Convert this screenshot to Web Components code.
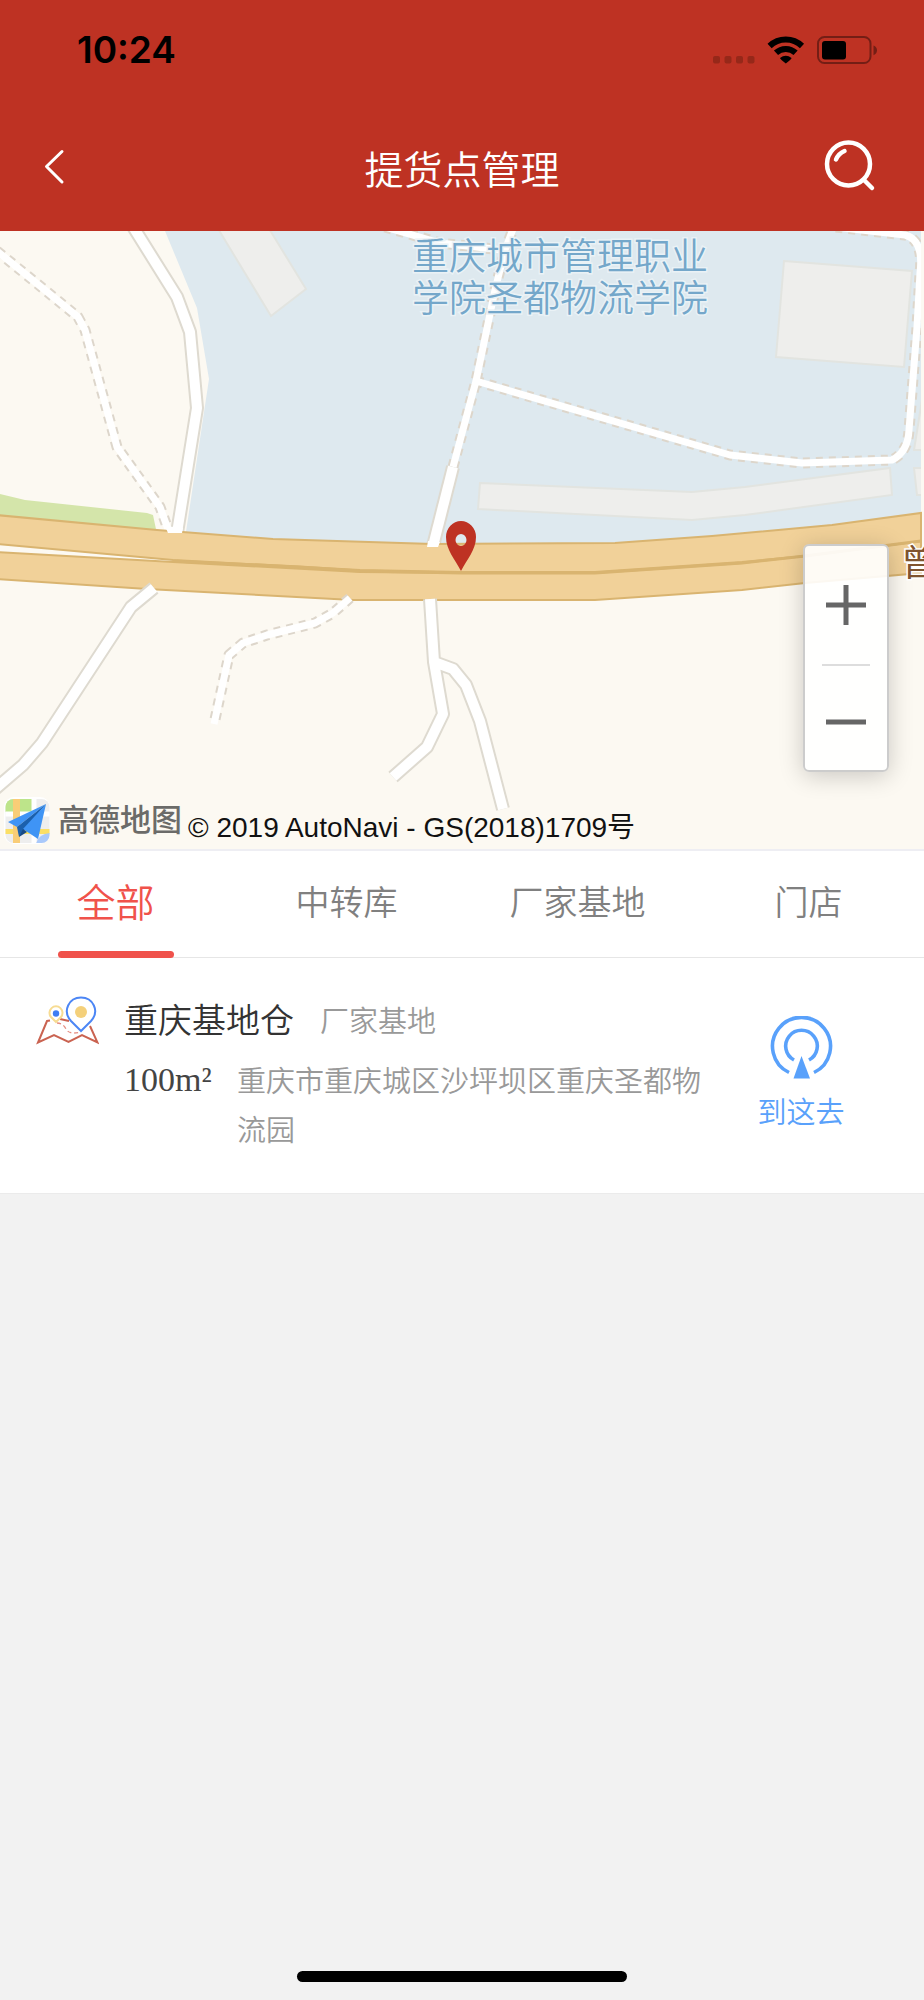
<!DOCTYPE html>
<html lang="zh-CN">
<head>
<meta charset="utf-8">
<meta name="viewport" content="width=device-width, initial-scale=1">
<title>提货点管理</title>
<style>
html, body { margin: 0; }
body { background: #f2f2f2; font-family: "Noto Sans CJK SC", sans-serif; font-weight: 350; }
</style>
</head>
<body>
<pickup-page>
  <status-bar slot="top" time="10:24"></status-bar>
  <nav-bar slot="top">提货点管理</nav-bar>
  <area-map></area-map>
  <tab-bar>
    <tab-item selected>全部</tab-item>
    <tab-item>中转库</tab-item>
    <tab-item>厂家基地</tab-item>
    <tab-item>门店</tab-item>
  </tab-bar>
  <pickup-card>
    <span slot="name">重庆基地仓</span>
    <span slot="kind">厂家基地</span>
    <span slot="area">100m²</span>
    <span slot="address">重庆市重庆城区沙坪坝区重庆圣都物流园</span>
  </pickup-card>
</pickup-page>

<script>
function define(name, html) {
  const template = document.createElement('template');
  template.innerHTML = html;
  customElements.define(name, class extends HTMLElement {
    constructor() {
      super();
      this.attachShadow({ mode: 'open' }).append(template.content.cloneNode(true));
    }
    connectedCallback() {
      for (const node of this.shadowRoot.querySelectorAll('[data-attr]')) {
        node.textContent = this.getAttribute(node.dataset.attr);
      }
      const tab = this.shadowRoot.querySelector('[role=tab]');
      if (tab) tab.setAttribute('aria-selected', String(this.hasAttribute('selected')));
    }
  });
}

define('pickup-page', `
<style>
:host { display: flex; flex-direction: column; min-height: 100vh; }
header { background: #be3223; color: #fff; }
main { flex: 1; }
footer { display: flex; justify-content: center; padding-bottom: 18px; }
.home { width: 330px; height: 11px; border-radius: 6px; background: #000; }
</style>
<header><slot name="top"></slot></header>
<main><slot></slot></main>
<footer><div class="home"></div></footer>`);

define('status-bar', `
<style>
:host { display: flex; align-items: center; justify-content: space-between; height: 99px; padding: 0 46px 0 77px; color: #000; }
time { font: 600 37px/48px Inter, sans-serif; }
svg { display: block; }
</style>
<time data-attr="time"></time>
<svg width="168" height="32" viewBox="710 33 168 32" aria-hidden="true">
  <g fill="#962819"><rect x="713" y="55" width="7" height="7.500" rx="2"/><rect x="724.500" y="55" width="7" height="7.500" rx="2"/><rect x="736" y="55" width="7" height="7.500" rx="2"/><rect x="747.500" y="55" width="7" height="7.500" rx="2"/></g>
  <g fill="none" stroke="#000" stroke-width="6"><path d="M769.600 45A23.500 23.500 0 0 1 802 45"/><path d="M776 51.800A14.300 14.300 0 0 1 795.600 51.800"/></g>
  <path d="M780 57Q785.800 52.400 791.600 57Q791.500 58 785.800 62.500Q780.100 58 780 57Z"/>
  <rect x="818" y="36" width="52.500" height="26" rx="6.500" fill="none" stroke="#741e15" stroke-width="2"/>
  <rect x="822" y="40" width="24" height="18.500" rx="3"/>
  <path d="M873.500 44.500Q877 46 877 49.300T873.500 54.200Z" fill="#741e15"/>
</svg>`);

define('nav-bar', `
<style>
:host { display: grid; grid-template-columns: 120px 1fr 120px; align-items: center; height: 132px; }
h1 { margin: 0; font-size: 39px; line-height: 60px; font-weight: inherit; text-align: center; padding-top: 4px; }
button { all: unset; display: block; height: 60px; cursor: pointer; }
svg { display: block; fill: none; stroke: #fff; stroke-linecap: round; stroke-linejoin: round; }
.find { justify-self: end; }
</style>
<button aria-label="返回"><svg width="80" height="60" viewBox="0 135 80 60" stroke-width="3"><path d="M62 151.500L46.500 166.500L62 182"/></svg></button>
<h1><slot></slot></h1>
<button class="find" aria-label="搜索"><svg width="104" height="60" viewBox="820 135 104 60" stroke-width="4.500"><circle cx="848.500" cy="164" r="21.500"/><path d="M864 180L872 188M836 159.500Q838.500 153.500 844.500 151"/></svg></button>`);

define('map-zoom', `
<style>
:host { display: flex; flex-direction: column; align-items: center; box-sizing: border-box; width: 86px; height: 228px; border: 2px solid #ccc; border-radius: 6px; background: rgba(255,255,255,.9); box-shadow: 0 4px 24px rgba(0,0,0,.2); }
button { all: unset; box-sizing: border-box; flex: none; display: grid; place-items: center; width: 100%; height: 118px; cursor: pointer; }
.out { height: 104px; padding-top: 8px; }
svg { display: block; stroke: #666; stroke-width: 5; }
hr { flex: none; width: 48px; height: 2px; margin: 0; border: 0; background: #ddd; }
</style>
<button aria-label="放大"><svg width="40" height="40"><path d="M0 20H40M20 0V40"/></svg></button>
<hr>
<button class="out" aria-label="缩小"><svg width="40" height="40"><path d="M0 20H40"/></svg></button>`);

define('area-map', `
<style>
:host { display: block; position: relative; overflow: hidden; background: #fcf9f2; border-bottom: 2px solid #eeeef3; }
.map { display: block; width: 100%; height: auto; }
.edge { stroke: #dedad0; stroke-width: 14; }
.road { stroke: #fff; stroke-width: 10; }
.dash { stroke: #ddd6cb; stroke-width: 11; stroke-dasharray: 7 6; }
.path { stroke: #fff; stroke-width: 7; }
map-zoom { position: absolute; right: 35px; bottom: 77px; }
.credit { position: absolute; left: 4px; bottom: 5px; display: flex; align-items: center; }
.brand { margin-left: 8px; padding-bottom: 4px; font-size: 31px; line-height: 44px; font-weight: 500; color: #6b6b69; }
.copy { margin-left: 6px; padding-top: 16px; font: 28px/32px "Liberation Sans", "Noto Sans CJK SC", sans-serif; color: #111; white-space: nowrap; }
.credit svg { display: block; flex: none; }
</style>
<svg class="map" viewBox="0 231 924 618" role="img" aria-label="地图">
  <defs>
    <path id="a" d="M132 225L177 297L190 332L197 408L177 533"/>
    <path id="b" d="M-3 251L78 317L85 330L117 447L160 507L169 532"/>
    <path id="c" d="M154 588L131 607L42 743L23 765L-5 789"/>
    <path id="d" d="M350 598L333 613L315 623L267 635L243 643L229 655L214 724"/>
    <path id="e" d="M430 599L434 662L443 714L427 747L393 777M434 662L453 669L466 685L480 721L503 809"/>
    <path id="g" d="M433 546L453 467"/>
    <path id="h" d="M453 467L461 437L476 381L495 290L505 250L513 229M385 227L440 243L503 250M476 381L730 455L802 463L892 460Q908 452 909 430L917 327L920 273Q924 240 905 235L835 227"/>
  </defs>
  <path d="M165 231L197 308L209 379L184 545H921V231Z" fill="#dee9ef"/>
  <g fill="#eeeeec" stroke="#e2e4e0" stroke-width="2">
    <path d="M217 227L271 316L306 289L268 227Z"/><path d="M784 261L912 271L904 367L776 357Z"/>
    <path d="M480 483L692 492L745 487L890 468L892 495L745 515L692 520L478 509Z"/>
    <path d="M922 400L914 450H922M922 468H914L917 495H922"/>
  </g>
  <path d="M0 494L25 500L147 513L153 515L157 534L0 524Z" fill="#d4e5aa"/>
  <g fill="none" stroke-linejoin="round">
    <use href="#h" class="dash"/><use href="#b" class="dash"/>
    <use href="#h" class="path"/><use href="#b" class="path"/>
    <use href="#a" class="edge"/><use href="#a" class="road"/>
    <use href="#g" class="edge"/><use href="#g" class="road"/>
  </g>
  <rect x="921" y="225" width="3" height="330" fill="#fcf9f2"/>
  <g fill="#f1d199" stroke="#d9b470" stroke-width="2">
    <path d="M-4 552L173 562L360 572L462 573H595L742 563L805 556L921 541V573L805 583L742 590L595 600H353L147 589L-4 579Z"/>
    <path d="M-4 515L157 530L273 539L433 544L615 543L712 536L832 525L921 513V541L805 556L742 562L595 572H462L360 570L173 560L-4 544Z"/>
    <path d="M173 561L300 567L360 571L462 573H595L742 563L805 556L921 541" fill="none" stroke-width="3"/>
  </g>
  <path d="M165 526L168 533H182L183 528M428 541L427 547H438L440 542" fill="#fff"/>
  <g fill="none" stroke-linejoin="round">
    <use href="#c" class="edge"/><use href="#c" class="road"/>
    <use href="#d" class="dash"/><use href="#d" class="path"/>
    <use href="#e" class="edge"/><use href="#e" class="road"/>
  </g>
  <path d="M461 571C455 559 446 550 446 537A15 16 0 0 1 476 537C476 550 467 559 461 571ZM461 534A5.500 6 0 0 0 461 546A5.500 6 0 0 0 461 534Z" fill="#be3223" fill-rule="evenodd"/>
  <g font-size="37" fill="#74a7ca" stroke="#eaf2f6" stroke-width="3" paint-order="stroke">
    <text x="412" y="270">重庆城市管理职业</text>
    <text x="412" y="312">学院圣都物流学院</text>
  </g>
  <text x="901" y="576" font-size="36" font-weight="400" fill="#80542f" stroke="#fff" stroke-width="3" paint-order="stroke">曾</text>
</svg>
<map-zoom></map-zoom>
<div class="credit">
  <svg width="46" height="48" viewBox="4 795 46 48" aria-hidden="true">
    <rect x="4" y="796" width="46" height="47" rx="10" fill="#fff"/>
    <clipPath id="k"><rect x="5.500" y="798" width="44" height="44" rx="8"/></clipPath>
    <g clip-path="url(#k)">
      <path d="M0 795H60V850H0Z" fill="#eee"/><path d="M0 795H32V811H0Z" fill="#bde48a"/>
      <path d="M34 795V850M0 813H55" stroke="#fff" stroke-width="5"/>
      <path d="M0 828H55V833H0Z" fill="#fbdf66"/><path d="M13 795H20V850H13Z" fill="#f9cd77"/>
      <path d="M36 843Q38 833 50 832V843Z" fill="#a9c9fb"/>
    </g>
    <path d="M46 803L8 821L17 826Z" fill="#3f94f5"/><path d="M46 803L17 826L19 836Z" fill="#1b60ad"/>
    <path d="M46 803L23 828L38 838Z" fill="#3f94f5"/><path d="M23 828L19 836L27 831Z" fill="#184b87"/>
  </svg>
  <span class="brand">高德地图</span>
  <span class="copy">© 2019 AutoNavi - GS(2018)1709号</span>
</div>`);

define('tab-bar', `
<style>
:host { display: grid; grid-template-columns: repeat(4, 1fr); height: 106px; border-bottom: 1px solid #e6e6e6; background: #fff; }
</style><slot></slot>`);

define('tab-item', `
<style>
:host { display: flex; --ink: #808080; --size: 34px; --line: transparent; }
:host([selected]) { --ink: #f0524b; --size: 39px; --line: #f0524b; }
button { all: unset; flex: 1; display: flex; flex-direction: column; align-items: center; color: var(--ink); font-size: var(--size); cursor: pointer; }
span { flex: 1; line-height: 99px; }
i { width: 116px; height: 7px; margin-bottom: -1px; border-radius: 4px; background: var(--line); }
</style>
<button role="tab"><span><slot></slot></span><i></i></button>`);

define('pickup-card', `
<style>
:host { display: flex; align-items: flex-start; padding: 35px 79px 40px 36px; background: #fff; border-bottom: 1px solid #ebebeb; }
.icon { flex: none; margin-right: 25px; }
svg { display: block; }
.info { flex: 1; }
.row { display: flex; }
.head { align-items: center; gap: 26px; line-height: 52px; margin-bottom: 10px; }
h2 { margin: 0; font-size: 34px; font-weight: inherit; color: #333; }
.kind, .address { font-size: 29px; color: #999; }
.area { flex: none; width: 113px; font: 34px/49px "Liberation Serif", serif; color: #444; }
.address { line-height: 49px; }
a { flex: none; display: flex; flex-direction: column; align-items: center; width: 88px; margin: 23px 0 0 36px; color: #59a1fb; text-decoration: none; font-size: 29px; line-height: 44px; white-space: nowrap; gap: 8px; }
</style>
<svg class="icon" width="63" height="52" viewBox="36 993 63 52" fill="none" stroke-width="2" aria-hidden="true">
  <path d="M50 1020.500L47 1021L38 1042.500L54 1035L68.500 1042L82 1035L97.500 1042.500L90 1026M60 1019L69 1021" stroke="#ca6351"/>
  <path d="M57 1023Q63 1023 66 1029T81 1032" stroke="#e58d80" stroke-width="1.300" stroke-dasharray="4 3"/>
  <path d="M56 1022L51 1017A6.500 6.500 0 1 1 61 1017Z" stroke="#f7dc93"/>
  <path d="M81 1031L71 1021C62 1011 69 997.500 81 997.500S100 1011 91 1021Z" stroke="#4c86f5"/>
  <circle cx="56" cy="1013.500" r="3.200" fill="#3f7df3"/><circle cx="81" cy="1012" r="6" fill="#f4d07b"/>
</svg>
<div class="info">
  <div class="row head"><h2><slot name="name"></slot></h2><span class="kind"><slot name="kind"></slot></span></div>
  <div class="row"><span class="area"><slot name="area"></slot></span><span class="address"><slot name="address"></slot></span></div>
</div>
<a href="#navigate">
  <svg width="64" height="64" viewBox="769 1015 64 64" fill="none" stroke="#59a1fb" stroke-width="3.600" aria-hidden="true">
    <path d="M789 1071.500A29 29 0 1 1 814 1071.500"/><path d="M794 1059A15.800 15.800 0 1 1 809 1059"/>
    <path d="M801.500 1055L810 1077.500H793.500Z" fill="#59a1fb" stroke="none"/>
  </svg>
  <span>到这去</span>
</a>`);
</script>
</body>
</html>
